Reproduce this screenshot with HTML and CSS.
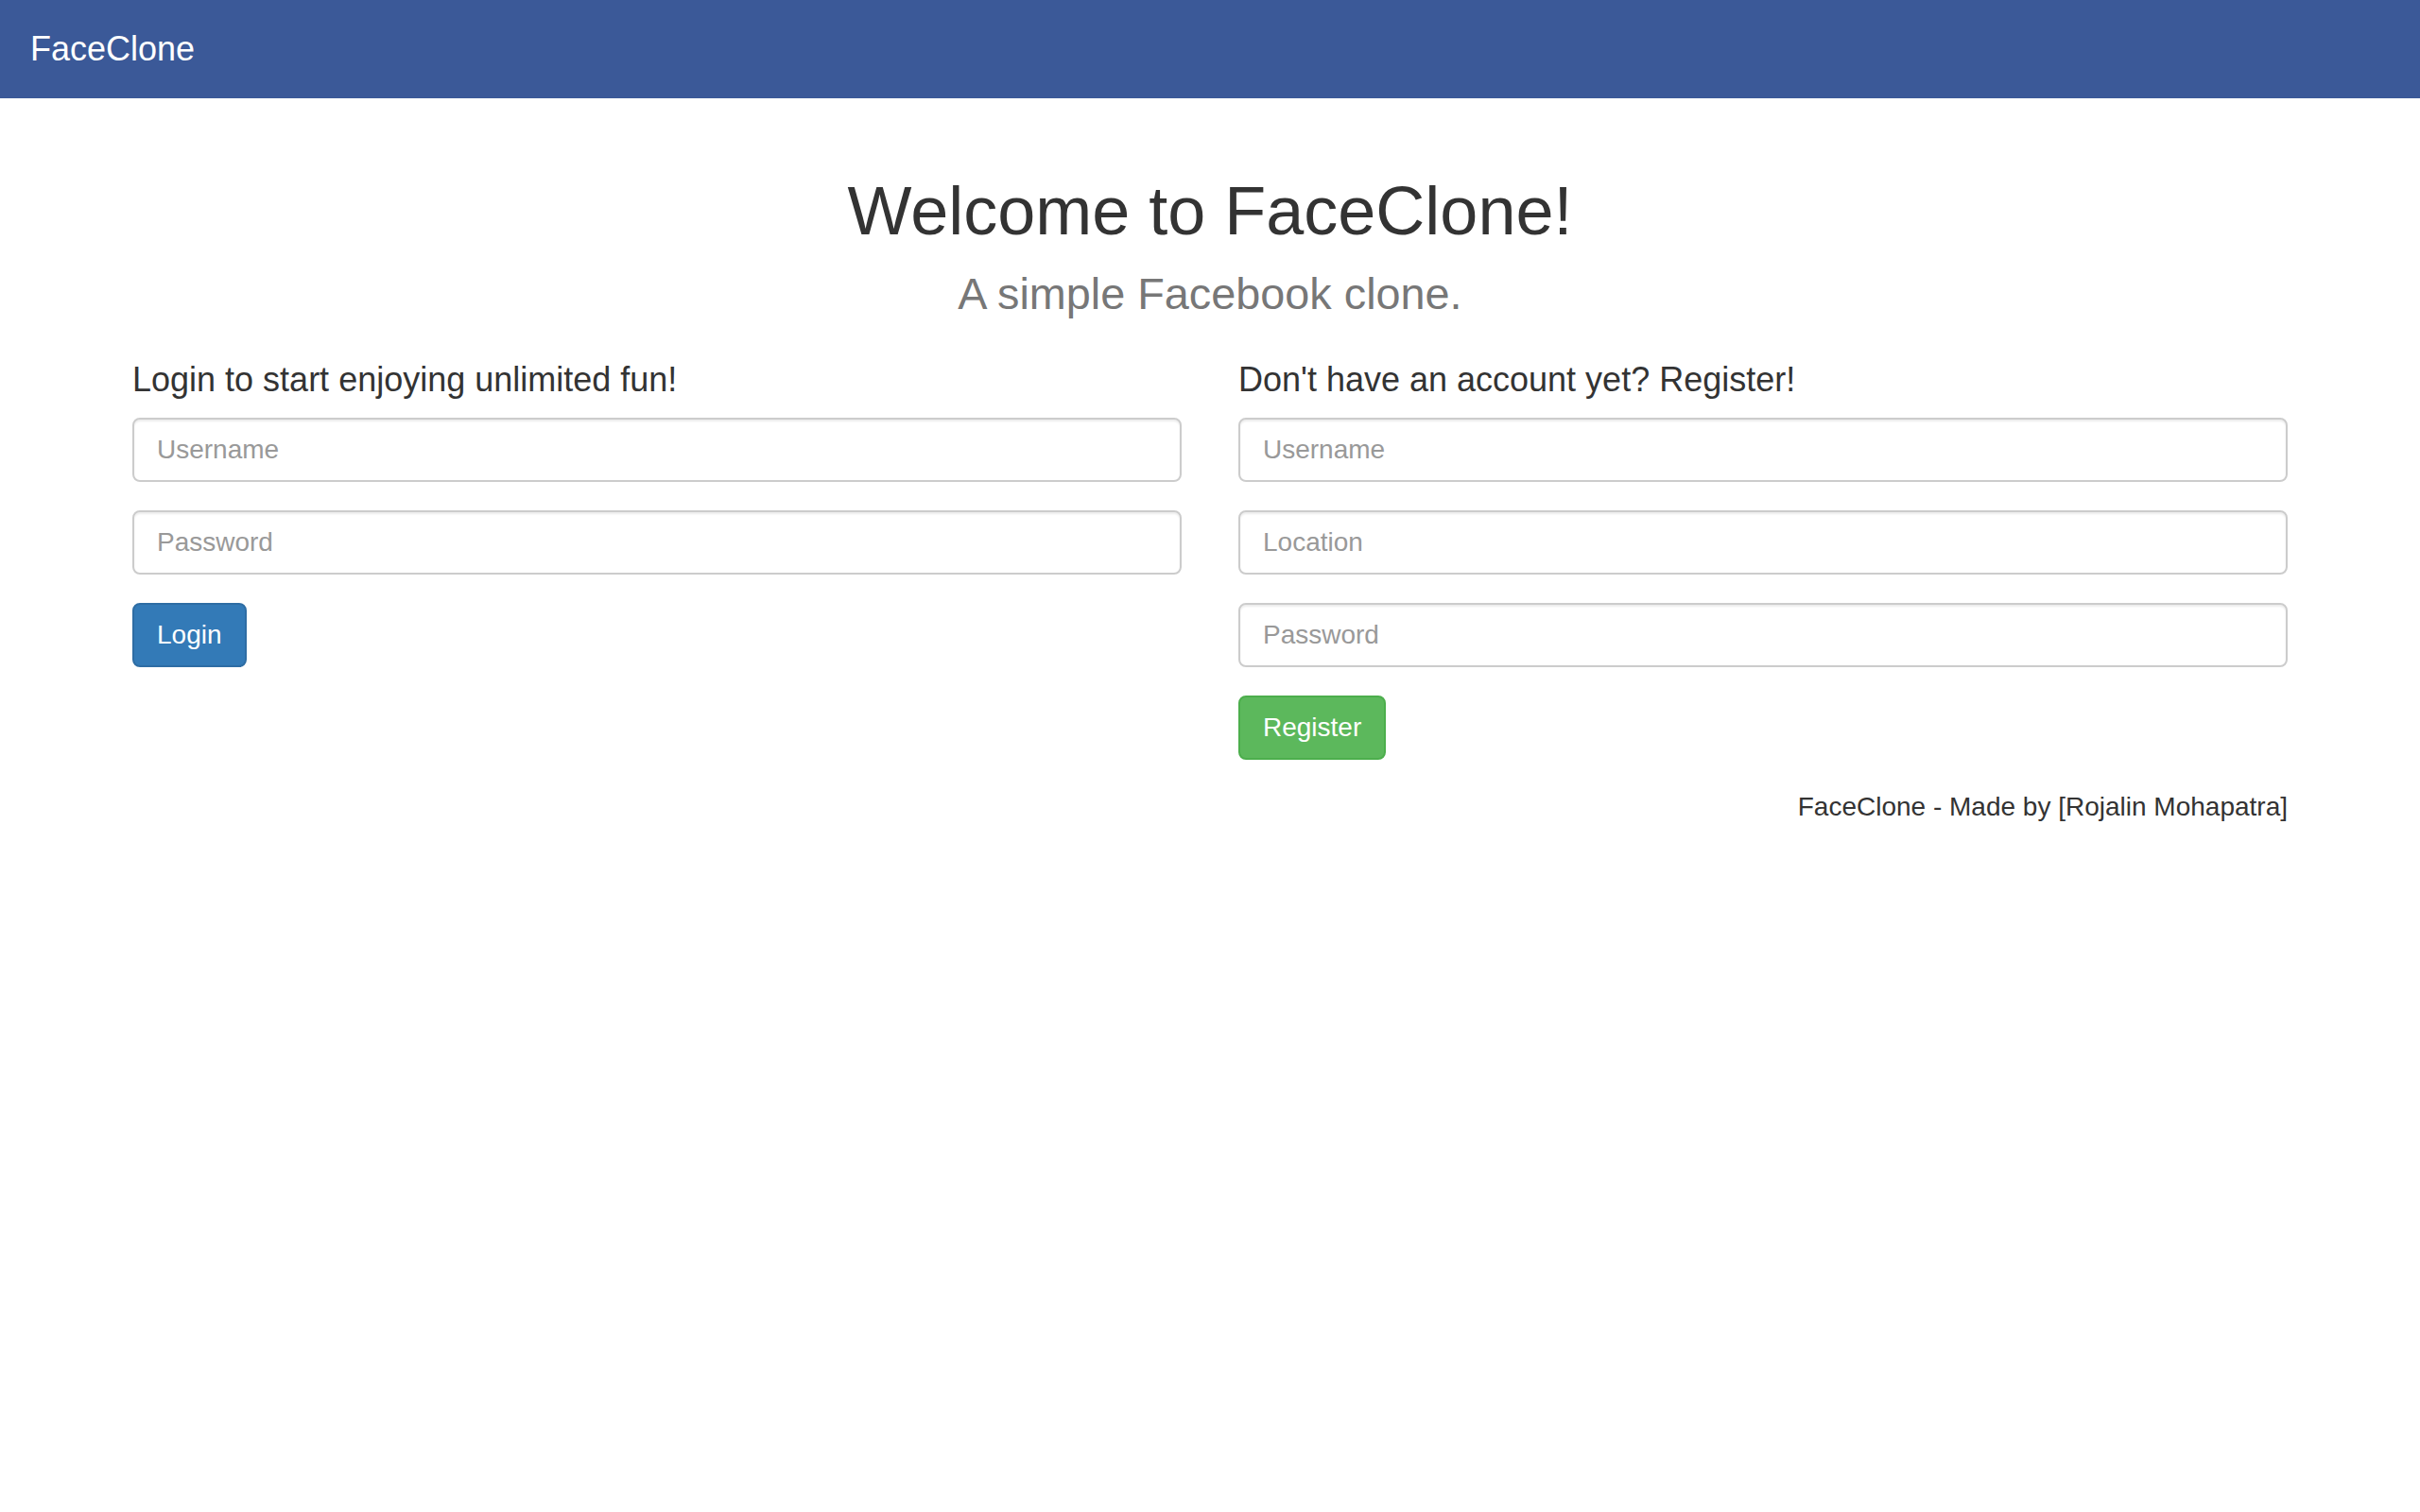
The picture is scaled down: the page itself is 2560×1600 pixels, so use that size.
FILE: index.html
```html
<!DOCTYPE html>
<html lang="en">
<head>
<meta charset="utf-8">
<title>FaceClone</title>
<link rel="stylesheet" href="styles.css">
</head>
<body>
<nav class="navbar">
  <a class="brand" href="#">FaceClone</a>
</nav>
<main class="container">
  <h1 class="title">Welcome to FaceClone!<br><small class="subtitle">A simple Facebook clone.</small></h1>
  <div class="row">
    <section class="col">
      <h4 class="col-title">Login to start enjoying unlimited fun!</h4>
      <form class="form">
        <div class="form-group"><input class="input" type="text" placeholder="Username"></div>
        <div class="form-group"><input class="input" type="password" placeholder="Password"></div>
        <div class="form-group"><button class="btn btn-primary" type="button">Login</button></div>
      </form>
    </section>
    <section class="col">
      <h4 class="col-title">Don't have an account yet? Register!</h4>
      <form class="form">
        <div class="form-group"><input class="input" type="text" placeholder="Username"></div>
        <div class="form-group"><input class="input" type="text" placeholder="Location"></div>
        <div class="form-group"><input class="input" type="password" placeholder="Password"></div>
        <div class="form-group"><button class="btn btn-success" type="button">Register</button></div>
      </form>
    </section>
  </div>
  <footer class="footer">FaceClone - Made by [Rojalin Mohapatra]</footer>
</main>
</body>
</html>
```
FILE: styles.css
```css
* { box-sizing: border-box; }
html, body { margin: 0; padding: 0; }
body {
  font-family: "Liberation Sans", Arial, Helvetica, sans-serif;
  font-size: 28px;
  line-height: 1.42857;
  color: #333;
  background: #fff;
}
.navbar {
  background: #3b5998;
  border: 2px solid #3b5998;
  height: 104px;
  margin-bottom: 40px;
  display: flex;
}
.brand {
  color: #fff;
  text-decoration: none;
  font-size: 36px;
  line-height: 40px;
  padding: 30px;
  height: 100px;
}
.container {
  display: flow-root;
  width: 2340px;
  margin: 0 auto;
  padding: 0 30px;
}
.title {
  margin: 40px 0 20px;
  font-size: 72px;
  font-weight: 500;
  line-height: 1.1;
  text-align: center;
  color: #333;
}
.subtitle {
  font-size: 65%;
  font-weight: 400;
  line-height: 1;
  color: #777;
}
.row {
  display: flex;
  margin: 0 -30px;
}
.col {
  flex: 0 0 50%;
  padding: 0 30px;
}
.col-title {
  margin: 20px 0 20px;
  font-size: 36px;
  font-weight: 500;
  line-height: 1.1;
}
.form { margin: 0; }
.form-group { margin-bottom: 30px; }
.input {
  display: block;
  width: 100%;
  height: 68px;
  padding: 12px 24px;
  font-family: inherit;
  font-size: 28px;
  line-height: 1.42857;
  color: #555;
  background: #fff;
  border: 2px solid #ccc;
  border-radius: 8px;
  box-shadow: inset 0 2px 2px rgba(0,0,0,.075);
  outline: none;
}
.input::placeholder { color: #999; }
.btn {
  display: inline-block;
  padding: 12px 24px;
  font-family: inherit;
  font-size: 28px;
  line-height: 1.42857;
  border: 2px solid transparent;
  border-radius: 8px;
  color: #fff;
  cursor: pointer;
}
.btn-primary { background: #337ab7; border-color: #2e6da4; }
.btn-success { background: #5cb85c; border-color: #4cae4c; }
.footer {
  text-align: right;
  margin: 0 0 40px;
}
```
